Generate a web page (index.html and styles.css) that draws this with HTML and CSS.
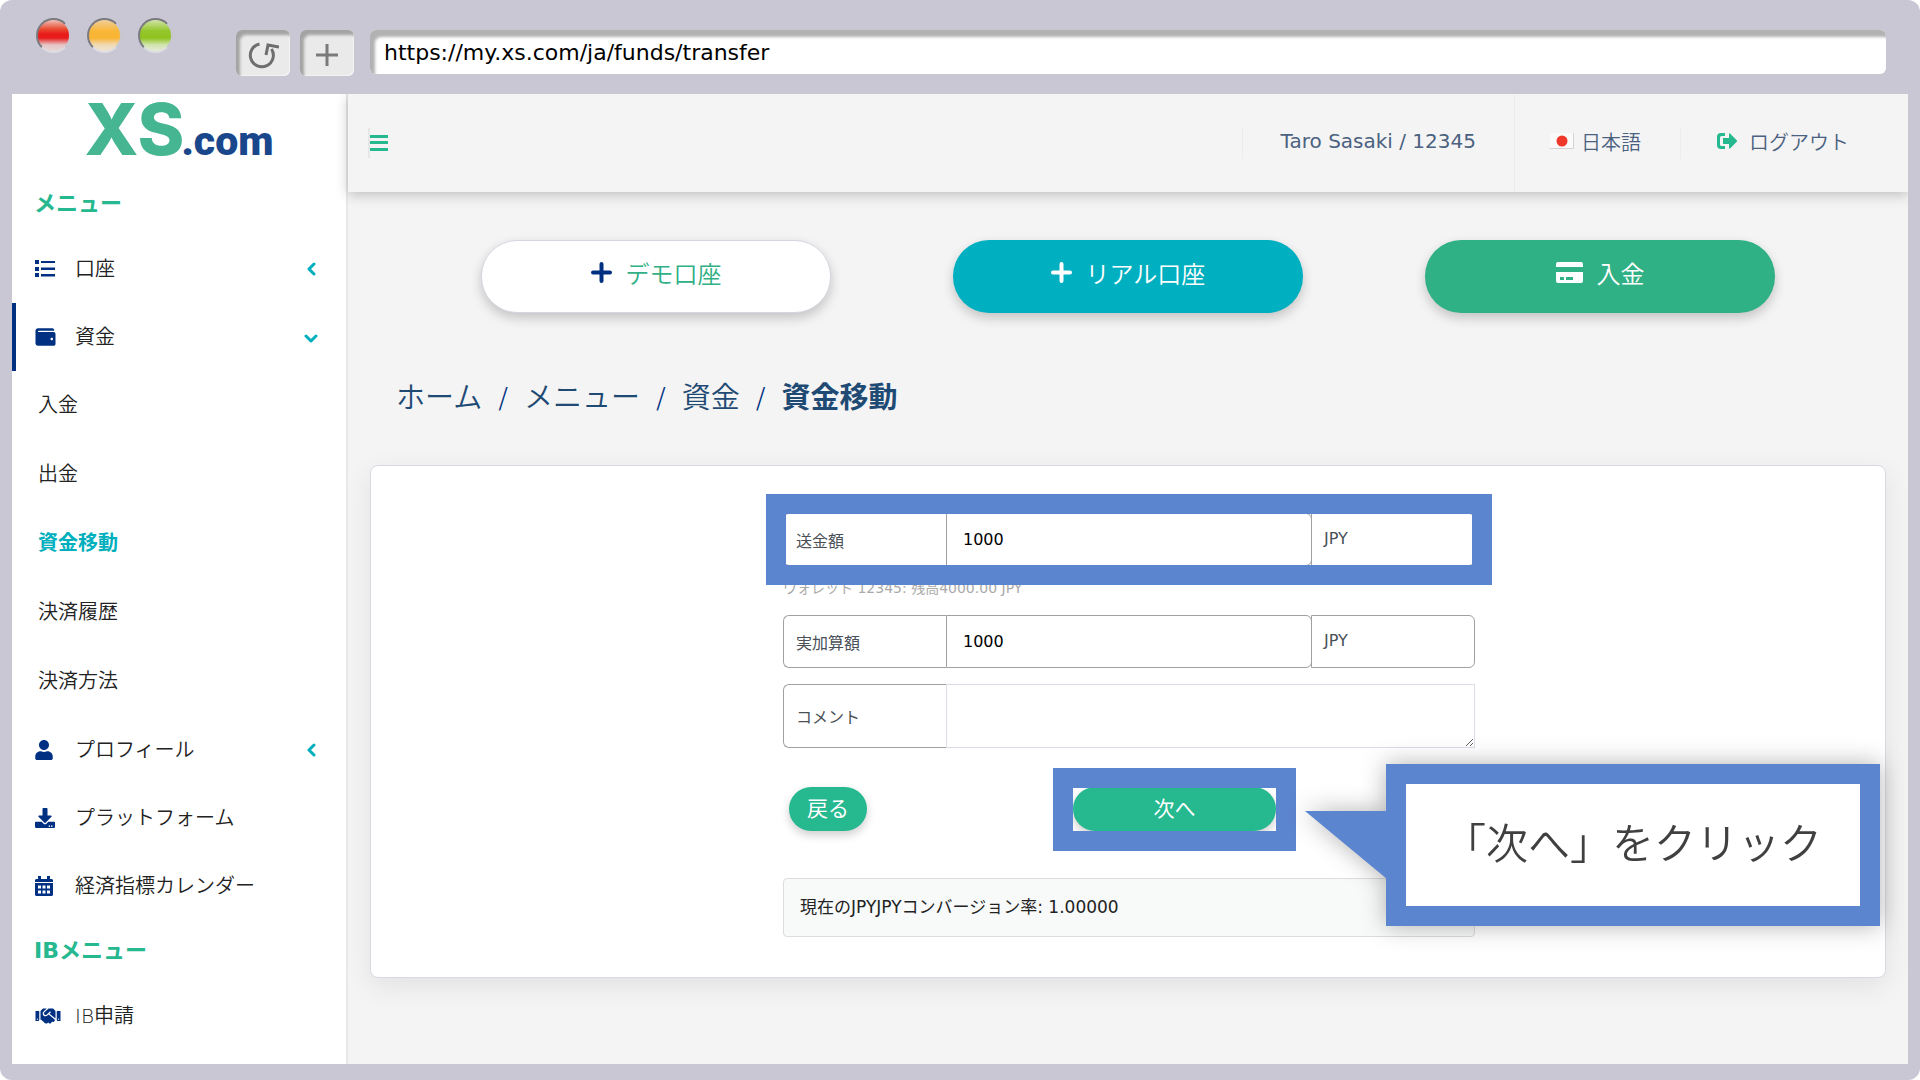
FILE: index.html
```html
<!DOCTYPE html>
<html lang="ja">
<head>
<meta charset="utf-8">
<meta name="viewport" content="width=device-width, initial-scale=1">
<title>資金移動 | XS.com</title>
<link rel="stylesheet" href="styles.css">
</head>
<body>
<div class="browser">
  <div class="toolbar">
    <div class="lights">
      <span class="light light-red"></span>
      <span class="light light-amber"></span>
      <span class="light light-green"></span>
    </div>
    <div class="tools">
      <button class="tool" type="button" aria-label="再読み込み">
        <svg width="32" height="28" viewBox="0 0 32 28" fill="none" stroke="#6e6e6e" stroke-width="3"><path d="M12.500 3A11.500 11.500 0 1 0 24.500 8"/><path d="M19 14L21 4L32 6" stroke-linejoin="miter"/></svg>
      </button>
      <button class="tool" type="button" aria-label="新しいタブ">
        <svg width="22" height="22" viewBox="0 0 22 22" stroke="#7a7a7a" stroke-width="3"><path d="M11 0V22M0 11H22"/></svg>
      </button>
    </div>
    <input class="address" type="text" aria-label="アドレス" value="https://my.xs.com/ja/funds/transfer">
  </div>

  <div class="page">
    <aside class="sidebar">
      <a class="logo" href="#" aria-label="XS.com">
        <span class="logo-mark">XS</span><span class="logo-name">.com</span>
      </a>
      <nav>
        <h2 class="nav-title">メニュー</h2>
        <a class="nav-item" href="#">
          <svg class="nav-icon" width="20" height="20" viewBox="0 0 20 20" fill="currentColor"><path d="M0 1h4v4H0zM0 8h4v4H0zM0 14h4v4H0zM6 2h14v2H6zM6 8.500h14v2.500H6zM6 15h14v2.500H6z"/></svg>
          <span class="nav-label">口座</span>
          <svg class="chevron" width="14" height="14" viewBox="0 0 14 14"><path d="M10 2L5 7L10 12"/></svg>
        </a>
        <a class="nav-item nav-item-open" href="#">
          <svg class="nav-icon" width="21" height="20" viewBox="0 0 512 512" fill="currentColor"><path d="M461.200 128H80c-8.840 0-16-7.160-16-16s7.160-16 16-16h384c8.840 0 16-7.160 16-16 0-26.510-21.490-48-48-48H64C28.650 32 0 60.650 0 96v320c0 35.350 28.650 64 64 64h397.200c28.020 0 50.800-21.530 50.800-48V176c0-26.470-22.780-48-50.800-48zM416 336c-17.670 0-32-14.330-32-32s14.330-32 32-32 32 14.330 32 32-14.330 32-32 32z"/></svg>
          <span class="nav-label">資金</span>
          <svg class="chevron" width="14" height="14" viewBox="0 0 14 14"><path d="M2 6L7 11L12 6"/></svg>
        </a>
        <a class="nav-sub" href="#">入金</a>
        <a class="nav-sub" href="#">出金</a>
        <a class="nav-sub nav-sub-current" href="#" aria-current="page">資金移動</a>
        <a class="nav-sub" href="#">決済履歴</a>
        <a class="nav-sub" href="#">決済方法</a>
        <a class="nav-item" href="#">
          <svg class="nav-icon" width="18" height="20" viewBox="0 0 448 512" fill="currentColor"><path d="M224 256c70.700 0 128-57.300 128-128S294.700 0 224 0 96 57.300 96 128s57.300 128 128 128zm89.600 32h-16.700c-22.200 10.200-46.900 16-72.900 16s-50.600-5.800-72.900-16h-16.700C60.200 288 0 348.200 0 422.400V464c0 26.500 21.500 48 48 48h352c26.500 0 48-21.500 48-48v-41.600c0-74.200-60.200-134.400-134.400-134.400z"/></svg>
          <span class="nav-label">プロフィール</span>
          <svg class="chevron" width="14" height="14" viewBox="0 0 14 14"><path d="M10 2L5 7L10 12"/></svg>
        </a>
        <a class="nav-item" href="#">
          <svg class="nav-icon" width="20" height="20" viewBox="0 0 512 512" fill="currentColor"><path d="M216 0h80c13.300 0 24 10.700 24 24v168h87.700c17.800 0 26.700 21.500 14.100 34.100L269.700 378.300c-7.500 7.500-19.800 7.500-27.300 0L90.100 226.100c-12.600-12.600-3.700-34.100 14.100-34.100H192V24c0-13.300 10.700-24 24-24zm296 376v112c0 13.300-10.700 24-24 24H24c-13.300 0-24-10.700-24-24V376c0-13.300 10.700-24 24-24h146.700l49 49c20.100 20.100 52.500 20.100 72.600 0l49-49H488c13.300 0 24 10.700 24 24zm-124 88c0-11-9-20-20-20s-20 9-20 20 9 20 20 20 20-9 20-20zm64 0c0-11-9-20-20-20s-20 9-20 20 9 20 20 20 20-9 20-20z"/></svg>
          <span class="nav-label">プラットフォーム</span>
        </a>
        <a class="nav-item" href="#">
          <svg class="nav-icon" width="18" height="20" viewBox="0 0 18 20" fill="currentColor" fill-rule="evenodd"><path d="M3 0h3v3h6V0h3v3h2l1 1v2H0V4l1-1h2zM0 7h18v12l-1 1H1l-1-1zM3 9.500v3h3v-3zM7.500 9.500v3h3v-3zM12 9.500v3h3v-3zM3 14.500v3h3v-3zM7.500 14.500v3h3v-3zM12 14.500v3h3v-3z"/></svg>
          <span class="nav-label">経済指標カレンダー</span>
        </a>
        <h2 class="nav-title">IBメニュー</h2>
        <a class="nav-item" href="#">
          <svg class="nav-icon" width="26" height="20" viewBox="0 0 640 512" fill="currentColor"><path d="M434.700 64h-85.900c-8 0-15.700 3-21.600 8.400l-98.300 90c-.1.1-.2.3-.3.4-16.600 15.600-16.300 40.500-2.100 56 12.700 13.900 39.400 17.600 56.100 2.700.1-.1.3-.1.4-.2l79.900-73.200c6.500-5.900 16.700-5.500 22.600 1 6 6.500 5.500 16.600-1 22.600l-26.100 23.900L504 313.800c2.900 2.400 5.500 5 7.900 7.700V128l-54.600-54.600c-5.900-6-14.100-9.400-22.600-9.400zM544 128.200v223.900c0 17.700 14.300 32 32 32h64V128.200h-96zm48 223.900c-8.800 0-16-7.200-16-16s7.200-16 16-16 16 7.200 16 16-7.200 16-16 16zM0 384h64c17.700 0 32-14.300 32-32V128.200H0V384zm48-63.900c8.800 0 16 7.200 16 16s-7.200 16-16 16-16-7.200-16-16c0-8.900 7.200-16 16-16zm435.900 18.600L334.600 217.500l-30 27.500c-29.700 27.100-75.200 24.500-101.700-4.400-26.900-29.400-24.800-74.900 4.400-101.700L289.100 64h-83.800c-8.500 0-16.600 3.400-22.600 9.400L128 128v223.900h18.300l90.500 81.900c27.400 22.300 67.700 18.100 90-9.300l.2-.2 17.900 15.500c15.900 13 39.400 10.500 52.300-5.400l31.400-38.600 5.400 4.400c13.700 11.100 33.900 9.100 45-4.700l9.500-11.700c11.200-13.800 9.100-33.900-4.600-45.100z"/></svg>
          <span class="nav-label">IB申請</span>
        </a>
      </nav>
    </aside>

    <div class="content">
      <header class="header">
        <button class="burger" type="button" aria-label="メニューを閉じる">
          <svg width="18" height="16" viewBox="0 0 18 16" fill="#26b88f"><path d="M0 0h18v3H0zM0 6h18v3H0zM0 13h18v3H0z"/></svg>
        </button>
        <div class="header-links">
          <span class="user">Taro Sasaki / 12345</span>
          <a class="language" href="#">
            <svg width="24" height="16" viewBox="0 0 24 16"><path d="M0 0H24V16H0z" fill="#fafafa"/><path d="M0 15.500H23.500V0" fill="none" stroke="#d4d4d4"/><circle cx="12" cy="8" r="5.500" fill="#f0382a"/></svg>
            日本語
          </a>
          <a class="logout" href="#">
            <svg width="20" height="16" viewBox="0 0 20 16" fill="#26b88f"><path d="M8 0v3H4.500Q3 3 3 4.500v7Q3 13 4.500 13H8v3H4Q0 16 0 12V4Q0 0 4 0z"/><path d="M6 5h6V1q0-1 1-.5l7 7q.4.500 0 1l-7 7q-1 .5-1-.5v-4H6z"/></svg>
            ログアウト
          </a>
        </div>
      </header>

      <main>
        <div class="actions">
          <button class="action action-demo" type="button">
            <svg width="21" height="21" viewBox="0 0 21 21" fill="none" stroke="#003082" stroke-width="4" stroke-linecap="round"><path d="M10.500 2V19M2 10.500H19"/></svg>
            デモ口座
          </button>
          <button class="action action-real" type="button">
            <svg width="21" height="21" viewBox="0 0 21 21" fill="none" stroke="#fff" stroke-width="4" stroke-linecap="round"><path d="M10.500 2V19M2 10.500H19"/></svg>
            リアル口座
          </button>
          <button class="action action-deposit" type="button">
            <svg width="27" height="21" viewBox="0 0 27 21" fill="#fff" fill-rule="evenodd"><path d="M2 0H25Q27 0 27 2V5H0V2Q0 0 2 0z"/><path d="M0 10H27V19Q27 21 25 21H2Q0 21 0 19zM4 15v3h4v-3zM10 15v3h7v-3z"/></svg>
            入金
          </button>
        </div>

        <nav class="crumbs" aria-label="パンくず">
          <a href="#">ホーム</a><span class="slash">/</span><a href="#">メニュー</a><span class="slash">/</span><a href="#">資金</a><span class="slash">/</span><strong>資金移動</strong>
        </nav>

        <section class="card">
          <form class="form">
            <div class="row row-marked">
              <label class="row-label" for="amount">送金額</label>
              <input class="row-input" id="amount" type="text" value="1000">
              <span class="row-unit">JPY</span>
            </div>
            <p class="balance">ウォレット 12345: 残高4000.00 JPY</p>
            <div class="row">
              <label class="row-label" for="received">実加算額</label>
              <input class="row-input" id="received" type="text" value="1000">
              <span class="row-unit">JPY</span>
            </div>
            <div class="row row-comment">
              <label class="row-label" for="comment">コメント</label>
              <textarea class="row-text" id="comment"></textarea>
            </div>
            <div class="buttons">
              <button class="btn" type="button">戻る</button>
              <div class="next-marked"><button class="btn btn-next" type="submit">次へ</button></div>
            </div>
            <p class="rate">現在のJPYJPYコンバージョン率: 1.00000</p>
          </form>
          <div class="callout">「次へ」をクリック</div>
        </section>
      </main>
    </div>
  </div>
</div>
</body>
</html>
```
FILE: styles.css
```css
* {
  box-sizing: border-box;
}

body {
  margin: 0;
  background: #fff;
  font-family: "DejaVu Sans", "Noto Sans CJK JP", sans-serif;
  font-size: 20px;
  font-weight: 400;
  color: #222;
}

a {
  color: inherit;
  text-decoration: none;
}

h2,
p {
  margin: 0;
}

button,
input,
textarea {
  margin: 0;
  font: inherit;
}

button {
  cursor: pointer;
}

/* Browser window */

.browser {
  display: flex;
  flex-direction: column;
  min-height: 100vh;
  padding: 0 12px 16px;
  border-radius: 12px;
  background: #c8c7d3;
}

.toolbar {
  display: flex;
  align-items: flex-start;
  height: 94px;
  padding: 18px 22px 0 24px;
}

.lights {
  display: flex;
  gap: 16px;
  width: 200px;
}

.light {
  width: 35px;
  height: 35px;
  border: 2px solid;
  border-color: #7b7a80 #c8c7d0 #dcdce2 #7b7a80;
  border-radius: 50%;
}

.light-red {
  background: linear-gradient(#efc0b8, #e8492f 30%, #e91c1c 45%, #e91c1c 58%, #e6c4c4 80%, #e8d8d8);
}

.light-amber {
  background: linear-gradient(#efcf9b, #f9b737 35%, #f9b433 58%, #f0dab4 80%, #eee4d4);
}

.light-green {
  background: linear-gradient(#d0e4a8, #94c62a 35%, #8fc31f 58%, #d2e4ae 80%, #e4ecd6);
}

.tools {
  display: flex;
  gap: 10px;
  margin: 12px 16px 0 0;
}

.tool {
  display: flex;
  align-items: center;
  justify-content: center;
  width: 54px;
  height: 46px;
  padding: 4px 0 0;
  border: 0;
  border-radius: 6px;
  background: #eaeaea;
  box-shadow: inset 4px 5px 3px #a3a3a3, inset -1px -1px 1px #f4f4f4;
}

.address {
  flex: 1;
  min-width: 0;
  height: 44px;
  margin-top: 12px;
  padding: 2px 14px;
  border: 0;
  border-radius: 6px;
  background: #fff;
  box-shadow: inset 5px 7px 3px #b2b2b2;
  color: #000;
  font-size: 22px;
}

.page {
  display: flex;
  flex: 1;
  background: #f4f4f4;
}

/* Sidebar */

.sidebar {
  flex: none;
  width: 336px;
  border-right: 2px solid #e8e8e8;
  background: #fff;
}

.logo {
  display: flex;
  align-items: baseline;
  justify-content: center;
  height: 79px;
  line-height: 70px;
}

.logo-mark {
  color: #45b691;
  font-family: Inter, sans-serif;
  font-size: 71px;
  font-weight: 800;
}

.logo-name {
  margin-left: -3px;
  color: #1a478c;
  font-family: Roboto, sans-serif;
  font-size: 41px;
  font-weight: 900;
}

.nav-title {
  padding-left: 22px;
  color: #26b88f;
  font-size: 22px;
  font-weight: 700;
  line-height: 62px;
}

.nav-item {
  display: grid;
  grid-template-columns: 40px 1fr 14px;
  align-items: center;
  height: 68px;
  padding: 0 28px 0 19px;
  border-left: 4px solid transparent;
  font-weight: 350;
}

.nav-item-open {
  border-left-color: #003082;
}

.nav-label {
  padding-bottom: 4px;
}

.nav-icon {
  color: #003082;
}

.chevron {
  fill: none;
  stroke: #00afbd;
  stroke-width: 3;
  stroke-linecap: round;
  stroke-linejoin: round;
}

.nav-sub {
  display: block;
  padding-left: 26px;
  font-weight: 350;
  line-height: 69px;
}

.nav-sub-current {
  color: #00afbd;
  font-weight: 700;
}

/* Header */

.content {
  flex: 1;
  min-width: 0;
}

.header {
  display: flex;
  align-items: center;
  justify-content: space-between;
  height: 98px;
  padding-left: 20px;
  background: #f4f4f4;
  box-shadow: 0 3px 12px rgba(0, 0, 0, 0.22);
  clip-path: inset(0 0 -24px -12px);
  color: #4b6180;
}

.burger {
  display: flex;
  align-items: center;
  height: 30px;
  padding: 0;
  border: 0;
  border-left: 2px solid #e6e6e6;
  background: none;
}

.header-links {
  display: flex;
  align-items: center;
  align-self: stretch;
}

.user {
  display: flex;
  align-items: center;
  height: 32px;
  padding: 0 38px 4px;
  border-left: 1px solid #ececec;
}

.language {
  display: flex;
  gap: 7px;
  align-items: center;
  align-self: stretch;
  width: 166px;
  padding: 0 0 4px 35px;
  border-left: 1px solid #ececec;
  font-weight: 350;
}

.logout {
  display: flex;
  gap: 12px;
  align-items: center;
  height: 32px;
  padding: 0 59px 4px 36px;
  border-left: 1px solid #ececec;
  font-weight: 350;
}

/* Account actions */

main {
  padding: 48px 22px 86px;
}

.actions {
  display: grid;
  grid-template-columns: repeat(3, 1fr);
  justify-items: center;
  padding: 0 50px;
}

.action {
  display: flex;
  gap: 14px;
  align-items: center;
  justify-content: center;
  width: 350px;
  height: 73px;
  padding: 0 0 8px;
  border: 0;
  border-radius: 36px;
  box-shadow: 0 5px 12px rgba(0, 0, 0, 0.2);
  color: #fff;
  font-size: 24px;
  font-weight: 350;
}

.action-demo {
  border: 1px solid #d5d7e0;
  background: #fff;
  color: #30b085;
}

.action-real {
  background: #00afc0;
}

.action-deposit {
  background: #30b085;
}

.crumbs {
  display: flex;
  gap: 16px;
  margin: 63px 0 45px;
  padding-left: 26px;
  color: #1f4a73;
  font-size: 29px;
  font-weight: 350;
  line-height: 44px;
}

.crumbs strong {
  font-weight: 700;
}

.slash {
  color: #003082;
}

/* Transfer form */

.card {
  position: relative;
  padding: 47px 20px 40px 22px;
  border: 1px solid #d8dae2;
  border-radius: 8px;
  background: #fff;
  box-shadow: 0 8px 28px rgba(0, 0, 0, 0.08);
}

.form {
  max-width: 692px;
  margin: 0 auto;
  color: #495057;
  font-size: 16px;
}

.row {
  display: flex;
  height: 53px;
}

.row-label {
  display: flex;
  align-items: center;
  width: 163px;
  padding-left: 12px;
  border: 1px solid #a0a0a0;
  border-right: 0;
  border-radius: 6px 0 0 6px;
}

.row-input {
  flex: 1;
  min-width: 0;
  padding: 0 16px;
  border: 1px solid #a0a0a0;
  border-radius: 0 6px 6px 0;
  background: #fff;
  color: #000;
}

.row-unit {
  display: flex;
  align-items: center;
  width: 164px;
  margin-left: -1px;
  padding: 0 0 2px 12px;
  border: 1px solid #a0a0a0;
  border-radius: 0 6px 6px 0;
}

/* Blue frame over the amount row */
.row-marked {
  position: relative;
}

.row-marked::after,
.next-marked::after {
  position: absolute;
  border: 20px solid #5c85cf;
  content: "";
  pointer-events: none;
}

.row-marked::after {
  inset: -19px -17px;
}

.balance {
  margin: 12px 0 17px;
  color: #aaa;
  font-size: 14px;
  line-height: 20px;
}

.row-comment {
  height: 64px;
  margin-top: 16px;
}

.row-text {
  flex: 1;
  border: 1px solid #dcdde6;
  background: #fff;
  resize: both;
}

.buttons {
  display: flex;
  gap: 206px;
  margin: 39px 0 47px;
  padding-left: 6px;
}

.btn {
  height: 44px;
  padding: 0 18px 4px;
  border: 0;
  border-radius: 22px;
  background: #26b88f;
  box-shadow: 0 4px 10px rgba(0, 0, 0, 0.2);
  color: #fff;
  font-size: 21px;
}

.btn-next {
  width: 203px;
}

.next-marked {
  position: relative;
}

.next-marked::after {
  inset: -19px -20px -20px;
}

.rate {
  padding: 0 16px;
  border: 1px solid #dcdddd;
  border-radius: 4px;
  background: #f8f9f9;
  color: #222;
  font-size: 17px;
  line-height: 57px;
}

.callout {
  position: absolute;
  right: 5px;
  bottom: 51px;
  width: 494px;
  border: 20px solid #5c85cf;
  background: #fff;
  filter: drop-shadow(0 0 12px rgba(0, 0, 0, 0.3));
  color: #404040;
  font-size: 42px;
  font-weight: 350;
  line-height: 122px;
  text-align: center;
}

.callout::before {
  position: absolute;
  top: 27px;
  left: -101px;
  width: 82px;
  height: 68px;
  background: #5c85cf;
  clip-path: polygon(0 0, 100% 0, 100% 100%);
  content: "";
}
```
